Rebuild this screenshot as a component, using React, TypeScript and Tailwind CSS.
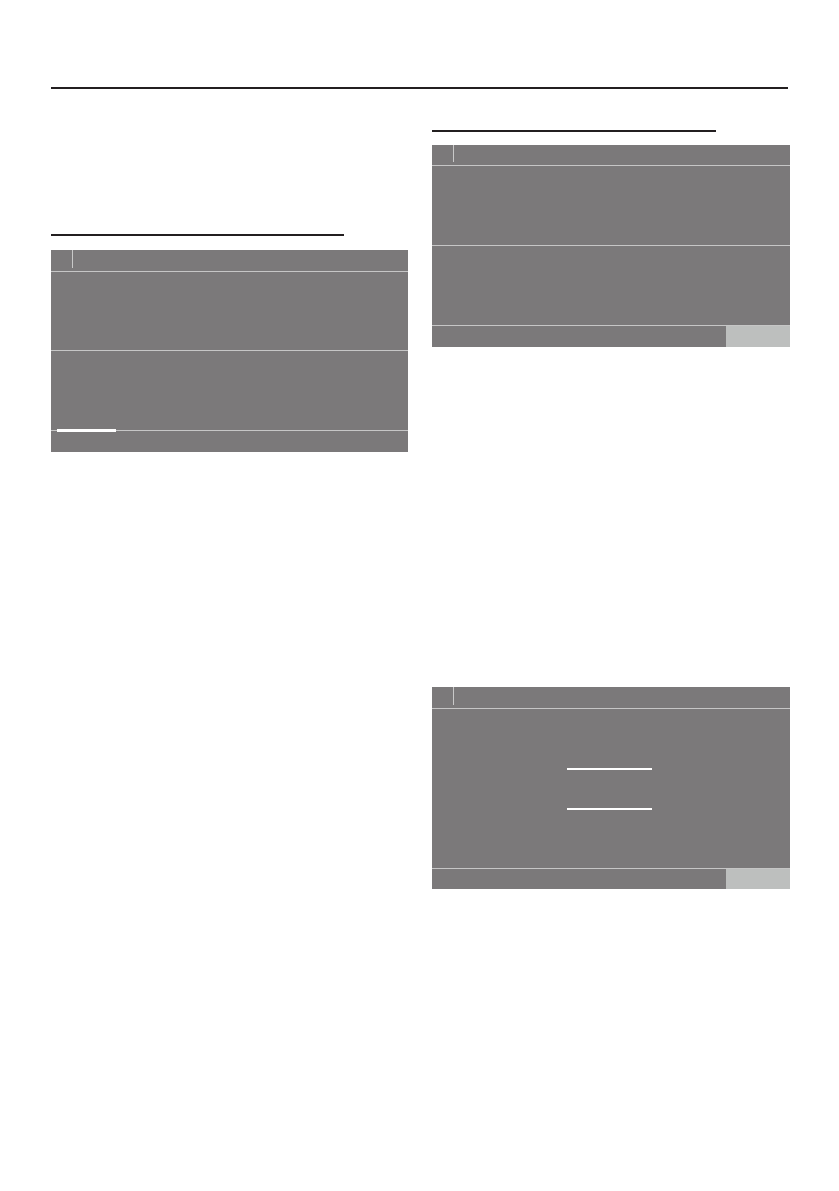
import React from 'react';

function PanelHeader({ h }: { h: string }) {
  return (
    <div className={`flex ${h}`}>
      <div className="w-[22px] border-r border-[#c9c9c9] mb-[3px]" />
    </div>
  );
}

function Rule() {
  return <div className="h-px bg-[#c6c6c6]" />;
}

export default function App() {
  return (
    <div className="min-h-[1191px] bg-white pl-[51px] pr-[49px]" style={{ fontFamily: '"Liberation Sans", Arial, sans-serif' }}>
      <div className="pt-[87px]">
        <div className="h-[2px] bg-[#231f20] mr-[2px]" />
      </div>

      <div className="grid grid-cols-[357px_358px] gap-x-[24px]">
        {/* left column */}
        <div className="flex flex-col">
          <div className="mt-[145px] h-[1.5px] w-[293px] bg-[#231f20]" />
          <div className="mt-[14px] bg-[#7b797a] flex flex-col">
            <PanelHeader h="h-[21px]" />
            <Rule />
            <div className="h-[78px]" />
            <Rule />
            <div className="h-[79px]" />
            <Rule />
            <div className="h-[21px]">
              <div className="ml-[6px] -mt-[2px] h-[3px] w-[59px] bg-white" />
            </div>
          </div>
        </div>

        {/* right column */}
        <div className="flex flex-col">
          <div className="mt-[41px] h-[1.5px] w-[284px] bg-[#231f20]" />
          <div className="mt-[13px] bg-[#7b797a] flex flex-col">
            <PanelHeader h="h-[20px]" />
            <Rule />
            <div className="h-[79px]" />
            <Rule />
            <div className="h-[79px]" />
            <Rule />
            <div className="h-[21px] flex justify-end">
              <div className="w-[64px] bg-[#bdbfbe]" />
            </div>
          </div>

          <div className="mt-[340px] bg-[#7b797a] flex flex-col">
            <PanelHeader h="h-[21px]" />
            <Rule />
            <div className="h-[159px] flex flex-col items-center">
              <div className="mt-[59px] h-[2px] w-[85px] bg-white -ml-[3px]" />
              <div className="mt-[38px] h-[2px] w-[85px] bg-white -ml-[3px]" />
            </div>
            <Rule />
            <div className="h-[20px] flex justify-end">
              <div className="w-[64px] bg-[#bdbfbe]" />
            </div>
          </div>
        </div>
      </div>
    </div>
  );
}
